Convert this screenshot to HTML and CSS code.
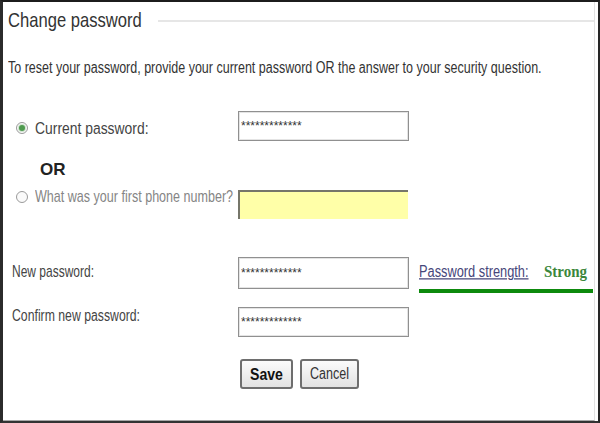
FILE: index.html
```html
<!DOCTYPE html>
<html lang="en">
<head>
    <meta charset="UTF-8">
    <title>Change password</title>
    <link rel="stylesheet" href="styles.css">
</head>
<body>
    <div class="frame">
        <div class="panel">
            <div class="legend">
                <h1><span class="tall">Change password</span></h1>
                <span class="rule"></span>
            </div>
            <p class="intro"><span class="tall">To reset your password, provide your current password OR the answer to your security question.</span></p>
            <form class="form">
                <div class="row row_current">
                    <label class="field_label"><span class="radio checked"></span><span class="tall">Current password:</span></label>
                    <input class="box" type="text" value="*************">
                </div>
                <div class="or">OR</div>
                <div class="row row_question">
                    <label class="field_label muted"><span class="radio"></span><span class="tall">What was your first phone number?</span></label>
                    <input class="box box_answer" type="text">
                </div>
                <div class="row row_new">
                    <label class="field_label plain"><span class="tall">New password:</span></label>
                    <input class="box box_tall" type="text" value="*************">
                    <div class="strength">
                        <div class="strength_text">
                            <a class="strength_link" href="#"><span class="tall">Password strength:</span></a>
                            <b class="tall">Strong</b>
                        </div>
                        <span class="bar"></span>
                    </div>
                </div>
                <div class="row row_confirm">
                    <label class="field_label plain"><span class="tall">Confirm new password:</span></label>
                    <input class="box" type="text" value="*************">
                </div>
                <div class="actions">
                    <button class="btn btn_save" type="button"><span class="tall">Save</span></button>
                    <button class="btn btn_cancel" type="button"><span class="tall">Cancel</span></button>
                </div>
            </form>
        </div>
    </div>
</body>
</html>
```

FILE: styles.css
```css
/* reset */
* {box-sizing: border-box;}
body {margin: 0; background: #fff; font-family: 'Liberation Sans', Arial, sans-serif; color: #444;}
h1, p {margin: 0;}

/* the screenshot uses a condensed face: small size, stretched up */
.tall {
    display: inline-block;
    white-space: nowrap;
    transform: scaleY(var(--sy, 1.25));
    transform-origin: 0 50%;
}

/* outer frame */
.frame {
    width: 600px;
    height: 423px;
    border-top: 2px solid #1c1c1c;
    border-left: 3px solid #2b2b2b;
    border-right: 2px solid #262626;
    border-bottom: 2px solid #333;
}
.panel {
    height: 100%;
    margin-right: 3px;
    border-right: 1px solid #e2e2e2;
    border-bottom: 1px solid #a8a8a8;
}

/* legend */
.legend {
    display: flex;
    align-items: center;
    padding: 7px 0 0 5px;
}
.legend h1 {
    font-size: 16.6px;
    line-height: 24px;
    font-weight: normal;
    color: #333;
    --sy: 1.2;
}
.legend .rule {
    flex: 1;
    height: 2px;
    margin-left: 16px;
    background: #e6e6e6;
}

.intro {
    margin-top: 26px;
    padding-left: 5px;
    font-size: 12.5px;
    line-height: 18px;
    color: #333;
    --sy: 1.28;
}

/* form rows */
.form {padding-left: 9px;}
.row {
    display: flex;
    align-items: flex-start;
}
.field_label {
    display: flex;
    align-items: center;
    flex: none;
    width: 226px;
    padding-left: 4px;
    font-size: 12.5px;
    line-height: 18px;
    color: #444;
}
.field_label.plain {padding-left: 0;}
.field_label.muted {color: #858585; font-size: 12.55px; --sy: 1.27;}

.radio {
    flex: none;
    width: 12px;
    height: 12px;
    margin-right: 7px;
    border: 1px solid #9a9a9a;
    border-radius: 50%;
    background: #fafafa;
    display: flex;
    align-items: center;
    justify-content: center;
}
.radio.checked::after {
    content: '';
    width: 6px;
    height: 6px;
    border-radius: 50%;
    background: #4f9a4f;
    box-shadow: 0 0 0 1px #cfe3cf;
}

.box {
    flex: none;
    width: 171px;
    height: 30px;
    padding: 0 2px;
    border: 1px solid #909090;
    box-shadow: inset 0 0 0 1px #e4e4e4;
    background: #fff;
    font-family: 'Liberation Sans', sans-serif;
    font-size: 12px;
    color: #333;
    outline: none;
}
.box_tall {height: 32px;}
.box_answer {
    width: 170px;
    height: 29px;
    border: none;
    border-top: 2px solid #76766a;
    border-left: 2px solid #76766a;
    background: #ffffa8;
    box-shadow: none;
}

.row_current {margin-top: 34px;}
.row_current .field_label {margin-top: 7px; font-size: 13.9px; line-height: 20px; --sy: 1.22;}

.or {
    margin-top: 19px;
    padding-left: 28px;
    font-size: 17px;
    font-weight: bold;
    line-height: 20px;
    color: #222;
}

.row_question {margin-top: 10px;}
.row_question .field_label {margin-top: -2px;}
.row_new {margin-top: 38px;}
.row_new .field_label {margin-top: 6px; font-size: 12px; --sy: 1.33;}
.row_confirm {margin-top: 14px;}
.row_confirm .field_label {font-size: 12.25px; --sy: 1.31;}

/* password strength */
.strength {
    width: 174px;
    margin: 5px 0 0 10px;
}
.strength_text {
    display: flex;
    align-items: baseline;
    line-height: 18px;
}
.strength_link {
    flex: none;
    width: 125px;
    font-size: 12.8px;
    color: #46467a;
    --sy: 1.25;
}
.strength_link .tall {text-decoration: underline;}
.strength_text b {
    font-family: 'Liberation Serif', serif;
    font-size: 15px;
    color: #3b873b;
    --sy: 1.13;
}
.bar {
    display: block;
    height: 4px;
    margin-top: 8px;
    background: #0d8a0d;
}

/* buttons */
.actions {
    display: flex;
    gap: 7px;
    margin-top: 22px;
    padding-left: 228px;
}
.btn {
    height: 30px;
    padding: 0;
    border: 2px solid #6e6e6e;
    border-radius: 3px;
    background: linear-gradient(#fbfbfb, #e2e2e2);
    font-family: 'Liberation Sans', sans-serif;
    line-height: 20px;
    color: #333;
}
.btn .tall {transform-origin: 50% 50%;}
.btn_save {width: 53px; font-size: 14.1px; font-weight: bold; color: #111; --sy: 1.2;}
.btn_cancel {width: 59px; font-size: 12.5px; --sy: 1.28;}
```
